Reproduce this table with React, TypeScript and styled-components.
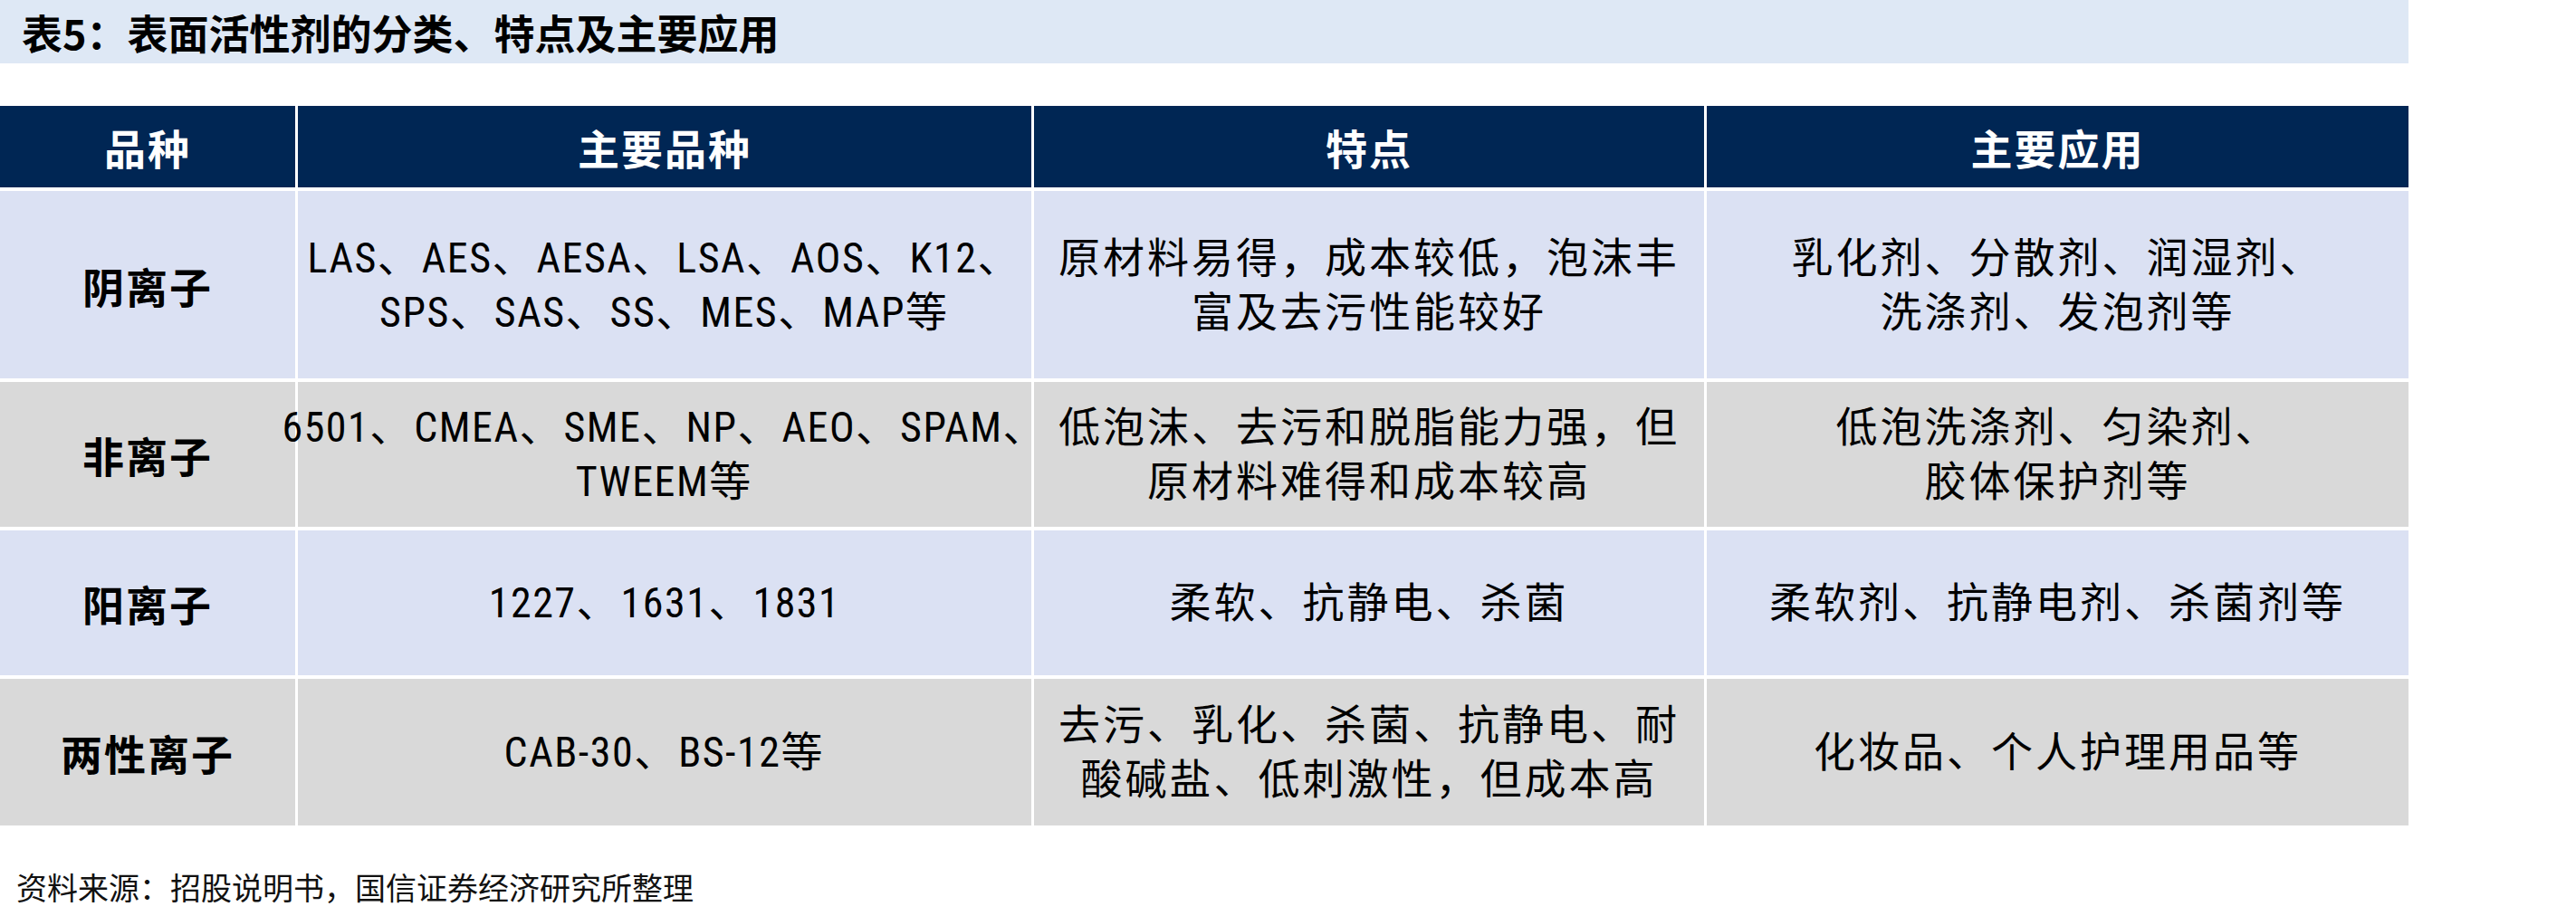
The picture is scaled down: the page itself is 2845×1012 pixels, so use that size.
import styled, { createGlobalStyle } from 'styled-components';

const GlobalStyle = createGlobalStyle`
  html, body {
    margin: 0;
    padding: 0;
    background: #ffffff;
  }
  body {
    font-family: "Noto Sans CJK SC", sans-serif;
  }
`;

const Page = styled.div`
  width: 2845px;
  min-height: 1012px;
  background: #ffffff;
`;

const TitleBar = styled.div`
  width: 2660px;
  height: 70px;
  background: #dee8f5;
  display: flex;
  align-items: center;
  padding-left: 24px;
  box-sizing: border-box;
`;

const Title = styled.h1`
  margin: 0;
  font-family: "Noto Sans CJK SC", sans-serif;
  font-size: 45px;
  font-weight: 700;
  color: #000000;
  line-height: 1;
`;

const Table = styled.div`
  margin-top: 47px;
  width: 2660px;
  display: grid;
  grid-template-columns: 326px 810px 740px 775px;
  grid-template-rows: 90px 207px 160px 160px 162px;
  column-gap: 3px;
  row-gap: 4px;
`;

const HeadCell = styled.div`
  background: #002654;
  color: #ffffff;
  display: flex;
  align-items: center;
  justify-content: center;
  font-family: "Noto Sans CJK SC", sans-serif;
  font-size: 46px;
  font-weight: 700;
  letter-spacing: 2px;
`;

const Cell = styled.div<{ $tone: 'blue' | 'gray'; $lead?: boolean }>`
  background: ${(p) => (p.$tone === 'blue' ? '#dbe1f3' : '#d9d9d9')};
  color: #000000;
  display: flex;
  flex-direction: column;
  align-items: center;
  justify-content: center;
  text-align: center;
  font-size: 46px;
  line-height: 60px;
  letter-spacing: ${(p) => (p.$lead ? '2px' : '3px')};
  font-weight: ${(p) => (p.$lead ? 700 : 400)};
  font-family: ${(p) =>
    p.$lead ? '"Noto Sans CJK SC", sans-serif' : 'Roboto, "Noto Sans CJK SC", sans-serif'};
  font-stretch: 75%;
`;

const Line = styled.span`
  display: block;
  white-space: nowrap;
`;

// latin runs: narrow, tighter tracking than the CJK text around them
const Latin = styled.span`
  letter-spacing: 1.5px;
`;

const Footer = styled.div`
  margin-top: 46px;
  padding-left: 18px;
  font-family: "Noto Sans CJK SC", sans-serif;
  font-size: 34px;
  line-height: 44px;
  color: #111111;
`;

const heads = ['品种', '主要品种', '特点', '主要应用'];

const rows = [
  {
    name: '阴离子',
    kinds: ['LAS、AES、AESA、LSA、AOS、K12、', 'SPS、SAS、SS、MES、MAP等'],
    traits: ['原材料易得，成本较低，泡沫丰', '富及去污性能较好'],
    uses: ['乳化剂、分散剂、润湿剂、', '洗涤剂、发泡剂等'],
  },
  {
    name: '非离子',
    kinds: ['6501、CMEA、SME、NP、AEO、SPAM、', 'TWEEM等'],
    traits: ['低泡沫、去污和脱脂能力强，但', '原材料难得和成本较高'],
    uses: ['低泡洗涤剂、匀染剂、', '胶体保护剂等'],
  },
  {
    name: '阳离子',
    kinds: ['1227、1631、1831'],
    traits: ['柔软、抗静电、杀菌'],
    uses: ['柔软剂、抗静电剂、杀菌剂等'],
  },
  {
    name: '两性离子',
    kinds: ['CAB-30、BS-12等'],
    traits: ['去污、乳化、杀菌、抗静电、耐', '酸碱盐、低刺激性，但成本高'],
    uses: ['化妆品、个人护理用品等'],
  },
];

const renderText = (text: string) =>
  text.split(/([A-Za-z0-9-]+)/).map((part, k) =>
    /^[A-Za-z0-9-]+$/.test(part) ? <Latin key={k}>{part}</Latin> : part
  );

const App = () => {
  return (
    <Page>
      <GlobalStyle />
      <TitleBar>
        <Title>表5：表面活性剂的分类、特点及主要应用</Title>
      </TitleBar>

      <Table>
        {heads.map((h) => (
          <HeadCell key={h}>{h}</HeadCell>
        ))}
        {rows.map((row, i) => {
          const tone = i % 2 === 0 ? 'blue' : 'gray';
          return [
            <Cell key={row.name} $tone={tone} $lead>
              {row.name}
            </Cell>,
            ...[row.kinds, row.traits, row.uses].map((lines, j) => (
              <Cell key={row.name + j} $tone={tone}>
                {lines.map((l) => (
                  <Line key={l}>{renderText(l)}</Line>
                ))}
              </Cell>
            )),
          ];
        })}
      </Table>

      <Footer>资料来源：招股说明书，国信证券经济研究所整理</Footer>
    </Page>
  );
};

export default App;
